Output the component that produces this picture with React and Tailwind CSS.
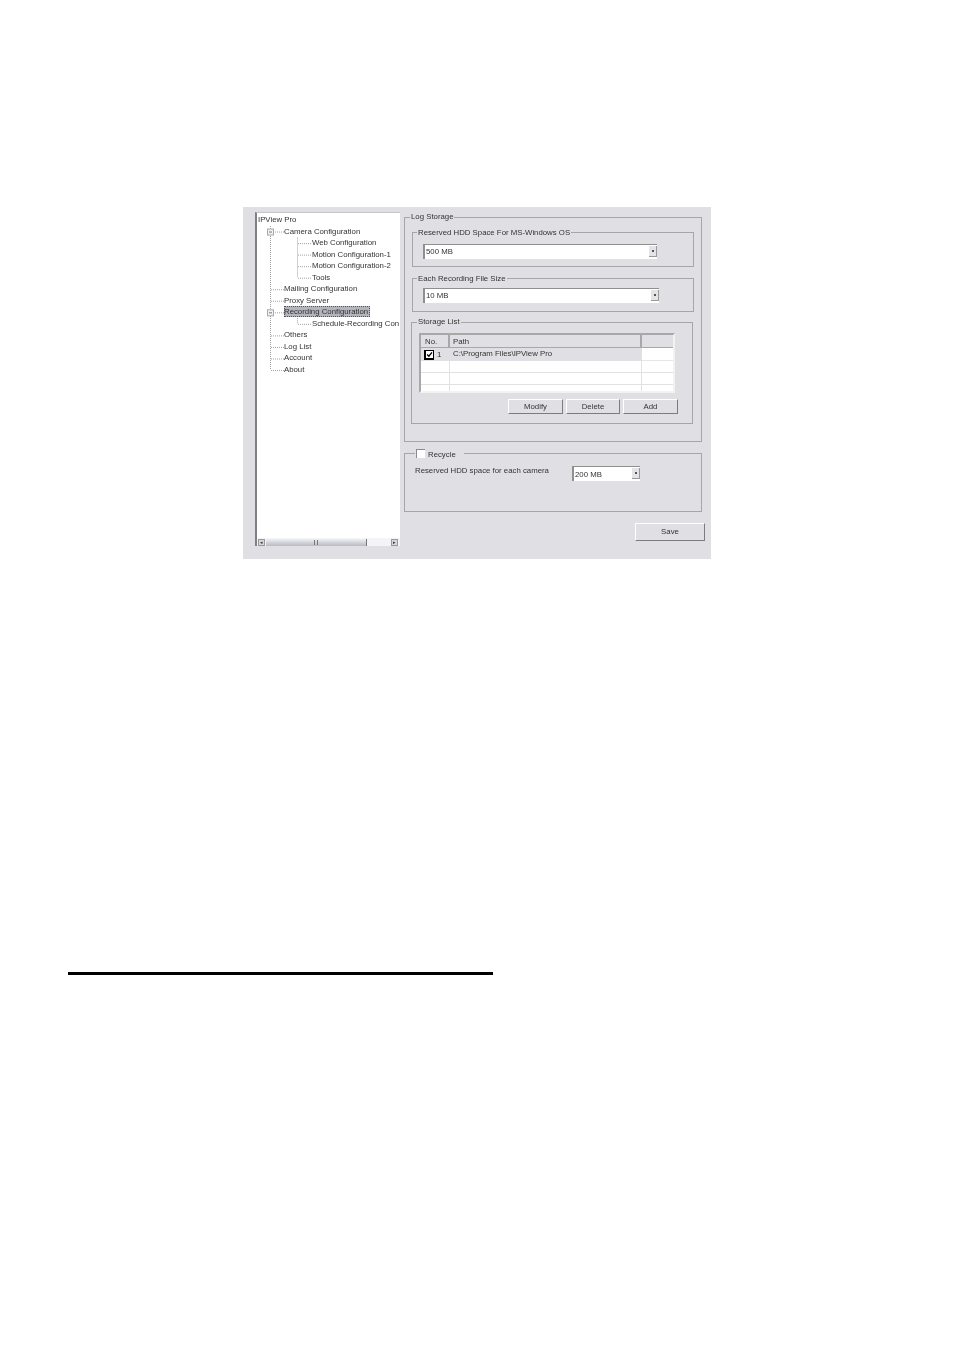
const font = { fontFamily: '"Liberation Sans", Arial, sans-serif' };

const treeRows = [
  { t: "IPView Pro", l: 0 },
  { t: "Camera Configuration", l: 1 },
  { t: "Web Configuration", l: 2 },
  { t: "Motion Configuration-1", l: 2 },
  { t: "Motion Configuration-2", l: 2 },
  { t: "Tools", l: 2 },
  { t: "Mailing Configuration", l: 1 },
  { t: "Proxy Server", l: 1 },
  { t: "Recording Configuration", l: 1, sel: true },
  { t: "Schedule-Recording Con", l: 2 },
  { t: "Others", l: 1 },
  { t: "Log List", l: 1 },
  { t: "Account", l: 1 },
  { t: "About", l: 1 },
];

function TreeLines() {
  const y = (i) => 7 + 11.54 * i;
  const h = [1, 6, 7, 8, 10, 11, 12, 13];
  const c = [2, 3, 4, 5];
  return (
    <svg className="absolute left-0 top-0 pointer-events-none" width="143" height="170" fill="none" stroke="#a4a4a4" strokeWidth="1" strokeDasharray="1 1">
      <path d={`M13.5 ${y(0) + 6}V${y(13)}`} />
      {h.map((i) => <path key={i} d={`M14 ${y(i) + 0.5}H27`} />)}
      <path d={`M40.5 ${y(1) + 6}V${y(5)}`} />
      {c.map((i) => <path key={i} d={`M41 ${y(i) + 0.5}H54`} />)}
      <path d={`M40.5 ${y(8) + 6}V${y(9)}`} />
      <path d={`M41 ${y(9) + 0.5}H54`} />
      {[1, 8].map((i) => (
        <g key={i} strokeDasharray="none">
          <rect x="10.5" y={y(i) - 2.5} width="6" height="6" fill="#f2f2f2" stroke="#a8a8a8" />
          <path d={`M12 ${y(i) + 0.5}H15`} stroke="#777" />
        </g>
      ))}
    </svg>
  );
}

function Tree() {
  return (
    <div className="relative w-[145px] h-[334px] shrink-0 flex flex-col bg-white border-l-2 border-l-[#808080] border-t border-t-[#c4c4c8] overflow-hidden">
      <div className="flex-1 pt-[1px]">
        {treeRows.map((r) => (
          <div
            key={r.t}
            className={
              "h-[11.54px] leading-[11.54px] whitespace-nowrap " +
              (r.l === 0 ? "pl-[1px]" : r.l === 1 ? "pl-[27px]" : "pl-[55px]")
            }
          >
            <span className={r.sel ? "inline-block h-[11px] leading-[11px] pr-[2px] bg-[#b4b4bc] outline-1 outline-dotted outline-[#555] -outline-offset-1" : ""}>{r.t}</span>
          </div>
        ))}
      </div>
      <TreeLines />
      <div className="h-[8px] flex items-center px-px bg-[#f4f4f6]">
        <div className="w-[7px] h-[7px] shrink-0 bg-[#d8d8dc] border border-[#999] flex items-center justify-center text-[5px] leading-none">◂</div>
        <div className="w-[101px] h-[7px] shrink-0 ml-px bg-gradient-to-b from-[#eef0f4] to-[#b8bac4] border-r border-[#777] flex items-center justify-center">
          <div className="w-[4px] h-[5px] border-x border-[#777]" />
        </div>
        <div className="flex-1" />
        <div className="w-[7px] h-[7px] shrink-0 mr-[1px] bg-[#d8d8dc] border border-[#999] flex items-center justify-center text-[5px] leading-none">▸</div>
      </div>
    </div>
  );
}

function Select({ value, className, text }) {
  return (
    <div className={"h-[15px] flex bg-white border-l-2 border-t border-[#8f8f8f] " + className}>
      <span className={"flex-1 pl-px whitespace-nowrap " + (text || "leading-[14px]")}>{value}</span>
      <div className="w-[8px] my-px mb-[2px] bg-[#e4e4e8] border-r border-b border-[#9a9a9a] flex items-center justify-center">
        <div className="w-[2px] h-[2px] bg-[#555]" />
      </div>
    </div>
  );
}

function Group({ title, legend, className, children }) {
  return (
    <fieldset className={"border border-[#a6a6aa] " + className}>
      <legend className={"h-[10px] whitespace-nowrap " + (legend || "ml-[4px] px-px leading-[12px]")}>{title}</legend>
      {children}
    </fieldset>
  );
}

function Btn({ children, className }) {
  return (
    <div className={"flex items-center justify-center bg-[#e0e0e4] border border-t-white border-l-white border-r-[#7c7c7c] border-b-[#7c7c7c] " + className}>
      {children}
    </div>
  );
}

function StorageTable() {
  const cols = "grid grid-cols-[29px_192px_1fr]";
  return (
    <div className="h-[60px] border-2 border-t-[#a8a8a8] border-l-[#a8a8a8] border-r-[#f2f2f2] border-b-[#f2f2f2] bg-white overflow-hidden">
      <div className={cols + " h-[13px] leading-[11px] bg-[#e0e0e4]"}>
        <div className="pl-[4px] pt-px border-r-2 border-b border-[#a8a8a8]">No.</div>
        <div className="pl-[3px] pt-px border-r-2 border-b border-[#a8a8a8]">Path</div>
        <div className="border-b border-[#a8a8a8]" />
      </div>
      <div className={cols + " h-[13px] leading-[12px]"}>
        <div className="bg-[#e0e0e4] flex items-center pl-[3px] gap-[3px]">
          <div className="w-[10px] h-[10px] bg-black flex items-center justify-center shrink-0">
            <svg width="7" height="7" viewBox="0 0 8 8" className="bg-white"><path d="M1.3 4l2 2L6.8 1.6" fill="none" stroke="#000" strokeWidth="1.6" /></svg>
          </div>
          <span>1</span>
        </div>
        <div className="bg-[#e0e0e4] pl-[3px] whitespace-nowrap">C:\Program Files\IPView Pro</div>
        <div className="border-b border-[#e6e6e6]" />
      </div>
      {[0, 1, 2].map((i) => (
        <div key={i} className={cols + " h-[12px]"}>
          <div className="border-r border-b border-[#e2e2e2]" />
          <div className="border-r border-b border-[#e2e2e2]" />
          <div className="border-b border-[#e2e2e2]" />
        </div>
      ))}
    </div>
  );
}

function RightPane() {
  return (
    <div className="w-[301px] shrink-0 flex flex-col">
      <Group title="Log Storage" legend="ml-[5px] px-px leading-[10px]" className="w-[298px] h-[230px]">
        <div className="px-[7px] pt-[5px]">
          <Group title="Reserved HDD Space For MS-Windows OS">
            <div className="pt-[7px] pb-[7px] pl-[10px] pr-[36px]"><Select value="500 MB" /></div>
          </Group>
          <Group title="Each Recording File Size" className="mt-[6px]">
            <div className="pt-[5px] pb-[8px] pl-[10px] pr-[34px]"><Select value="10 MB" /></div>
          </Group>
          <Group title="Storage List" legend="ml-[5px] px-px leading-[10px]" className="mt-[5px] -ml-px mr-px">
            <div className="pt-[6px] pb-[9px] pl-[7px] pr-[17px]">
              <StorageTable />
              <div className="mt-[6px] flex justify-end gap-[3px] -mr-[3px]">
                <Btn className="w-[55px] h-[15px]">Modify</Btn>
                <Btn className="w-[54px] h-[15px]">Delete</Btn>
                <Btn className="w-[55px] h-[15px]">Add</Btn>
              </div>
            </div>
          </Group>
        </div>
      </Group>
      <fieldset className="mt-[5px] w-[298px] h-[65px] border border-[#a6a6aa]">
        <legend className="ml-[10px] px-px h-[12px] flex items-center gap-[3px] pr-[8px]">
          <span className="w-[9px] h-[9px] bg-white border-l border-t border-[#8a8a8a]" />
          <span className="pt-[3px]">Recycle</span>
        </legend>
        <div className="flex items-start pt-[7px] pl-[10px]">
          <span className="w-[157px] leading-[9px] whitespace-nowrap">Reserved HDD space for each camera</span>
          <Select value="200 MB" className="w-[68px]" text="leading-[16px]" />
        </div>
      </fieldset>
      <Btn className="mt-[11px] ml-auto w-[70px] h-[18px]">Save</Btn>
    </div>
  );
}

export default function App() {
  return (
    <div className="w-[954px] h-[1350px] bg-white overflow-hidden pt-[207px]">
      <div style={font} className="ml-[243px] w-[468px] h-[352px] bg-[#e0e0e4] flex items-start gap-[4px] pl-[12px] pt-[5px] text-[7.8px] text-[#333] blur-[0.3px]">
        <Tree />
        <RightPane />
      </div>
      <div className="mt-[413px] ml-[68px] w-[425px] h-[3px] bg-black" />
    </div>
  );
}
